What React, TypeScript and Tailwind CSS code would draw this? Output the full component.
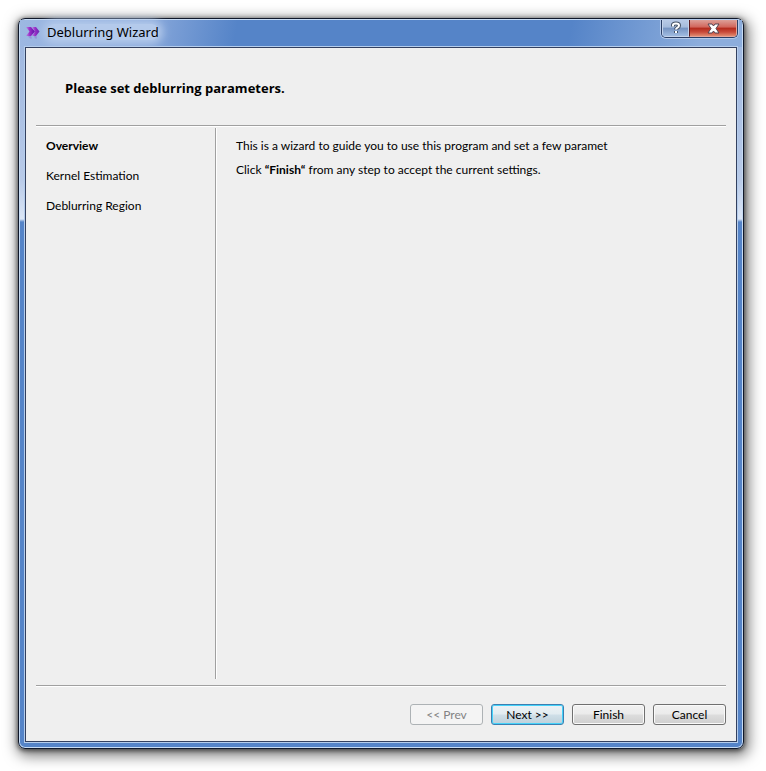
import type { ReactNode } from "react";

type DialogButtonProps = {
	children: ReactNode;
	disabled?: boolean;
	primary?: boolean;
};

const steps = ["Overview", "Kernel Estimation", "Deblurring Region"];

function WizardIcon() {
	return (
		<svg className="h-4 w-4" viewBox="0 0 16 16" aria-hidden="true">
			<defs>
				<linearGradient id="wizard" x1="0" y1="0" x2="1" y2="0">
					<stop offset="0" stopColor="#b98be0" />
					<stop offset="0.4" stopColor="#9a2fc8" />
					<stop offset="1" stopColor="#5d12a8" />
				</linearGradient>
			</defs>
			<path d="M0 3h5l4 4.500-4 4.500H0l3.500-4.500z" fill="url(#wizard)" />
			<path d="M6 3h4l3.500 4.500-3.500 4.500H6l3-4.500z" fill="url(#wizard)" />
			<path d="M2 12h3l1 2.500H4zM8 12h2.500l.500 2.500H9z" fill="#8f6fd0" opacity="0.5" />
		</svg>
	);
}

function CaptionButtons() {
	return (
		<div className="flex h-[18px] overflow-hidden rounded-b-[5px] border border-t-0 border-[#2b3f66] shadow-[0_0_0_1px_#b4c9ea]">
			<button
				type="button"
				aria-label="Help"
				className="flex w-[27px] items-center justify-center border border-t-0 border-[#c4d3ea] bg-[linear-gradient(#b8cae6_0%,#a5bbdc_45%,#7593c1_50%,#a0bbe0_100%)]"
			>
				<svg className="h-[14px] w-3" viewBox="0 0 12 14" aria-hidden="true">
					<path d="M3 5.500V4q0-1.500 3-1.500t3 2q0 1.500-1.500 2.200T6 8.500M6 10v2" fill="none" stroke="#475467" strokeWidth="4" />
					<path d="M3 5.500V4q0-1.500 3-1.500t3 2q0 1.500-1.500 2.200T6 8.500M6 10v2" fill="none" stroke="#ffffff" strokeWidth="2" />
				</svg>
			</button>
			<button
				type="button"
				aria-label="Close"
				className="flex w-[48px] items-center justify-center border border-t-0 border-[#e5a397] border-l-[#5a1a20] bg-[linear-gradient(#dda098_0%,#d1655a_45%,#b32a1c_50%,#c94a3a_75%,#e08a70_100%)]"
			>
				<svg className="h-[11px] w-[13px]" viewBox="0 0 13 11" aria-hidden="true">
					<path d="M1 1h4l1.500 2L8 1h4L9 5.500 12 10H8L6.500 8 5 10H1l3-4.500z" fill="#ffffff" stroke="#544350" />
				</svg>
			</button>
		</div>
	);
}

function DialogButton({ children, disabled, primary }: DialogButtonProps) {
	let look =
		"border-[#707070] bg-[linear-gradient(#f2f2f2_0%,#ebebeb_48%,#dddddd_52%,#cfcfcf_100%)] shadow-[inset_0_0_0_1px_#fafafa]";
	if (disabled) {
		look = "border-[#adb2b5] bg-[#f4f4f4] text-[#838383]";
	}
	if (primary) {
		look =
			"border-[#3c7fb1] bg-[linear-gradient(#edf2f5_0%,#e2ecf1_48%,#cfdfe8_52%,#bdd0da_100%)] shadow-[inset_0_0_0_1px_#45d2fa]";
	}
	return (
		<button
			type="button"
			disabled={disabled}
			className={`flex h-[21px] w-[73px] items-center justify-center rounded-[3px] border ${look}`}
		>
			{children}
		</button>
	);
}

export default function App() {
	return (
		<div className="flex min-h-screen bg-white pt-[18px] pr-[22px] pb-[22px] pl-[18px] font-['Lato',sans-serif] text-xs text-black">
			<div className="flex flex-1 flex-col rounded-[7px] border border-[#10182a] bg-[linear-gradient(#9ab4de_0px,#b8cae8_160px,#dbe6f6_200px,#5584c8_203px)] px-[6px] pb-[6px] shadow-[inset_0_0_0_1px_#c8dcf4,0_1px_4px_1px_rgba(0,0,0,0.5),2px_4px_14px_3px_rgba(0,0,0,0.5)]">
				<header className="mx-[-5px] mt-px flex h-[27px] bg-[linear-gradient(100deg,#9db8e2_0%,#87a7da_18%,#5584c8_30%,#5584c8_76%,#8caddc_94%)]">
					<div className="flex flex-1 items-start gap-[5px] pt-1 pl-[6px]">
						<WizardIcon />
						<h1 className="rounded-lg bg-[#b4caeb] font-['Noto_Sans',sans-serif] text-[13px] leading-4 shadow-[0_0_8px_4px_#b4caeb]">
							Deblurring Wizard
						</h1>
					</div>
					<div className="mr-1">
						<CaptionButtons />
					</div>
				</header>
				<div className="flex flex-1 flex-col border border-[#33405f] bg-[#efefef] px-[10px] shadow-[0_0_0_1px_#b5cdec]">
					<h2 className="flex h-[78px] items-center border-b border-[#a0a0a0] pl-[29px] pt-[5px] font-['Open_Sans',sans-serif] text-[13px] font-bold shadow-[0_1px_0_#ffffff]">
						Please set deblurring parameters.
					</h2>
					<div className="flex flex-1 pt-[2px] pb-[6px]">
						<nav className="w-[180px] border-r border-[#a0a0a0] pl-[10px] pt-[3px] shadow-[1px_0_0_#ffffff]">
							<ol>
								{steps.map((step) => (
									<li key={step} className="h-[30px] leading-[30px] first:font-bold">
										{step}
									</li>
								))}
							</ol>
						</nav>
						<main className="flex-1 pl-5 pt-[6px] leading-6">
							<p>This is a wizard to guide you to use this program and set a few paramet</p>
							<p>
								Click <b>“Finish“</b> from any step to accept the current settings.
							</p>
						</main>
					</div>
					<footer className="flex h-14 justify-end gap-2 border-t border-[#a0a0a0] pt-[18px] shadow-[inset_0_1px_0_#ffffff]">
						<DialogButton disabled>&lt;&lt; Prev</DialogButton>
						<DialogButton primary>Next &gt;&gt;</DialogButton>
						<DialogButton>Finish</DialogButton>
						<DialogButton>Cancel</DialogButton>
					</footer>
				</div>
			</div>
		</div>
	);
}
